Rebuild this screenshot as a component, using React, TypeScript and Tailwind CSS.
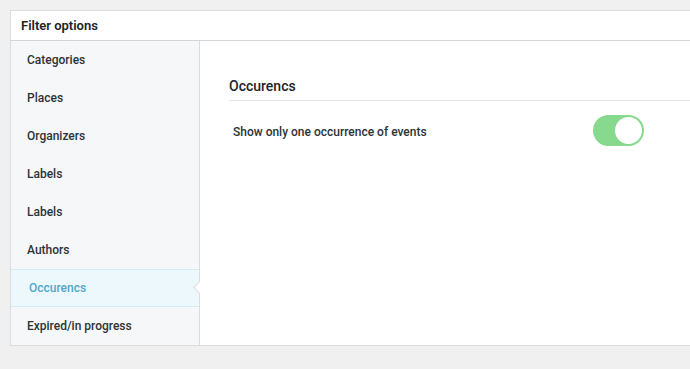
const items = ['Categories', 'Places', 'Organizers', 'Labels', 'Labels', 'Authors', 'Occurencs', 'Expired/in progress'];

function Toggle() {
  return (
    <div className="w-[51px] h-[31px] rounded-full bg-[#86d98d] p-[2px] flex justify-end">
      <div className="w-[27px] h-[27px] rounded-full bg-white" />
    </div>
  );
}

export default function App() {
  const active = 6;
  return (
    <div className="min-h-screen bg-[#f0f0f0] pt-[10px] pl-[10px] font-['Roboto',Arial,sans-serif]">
      <div className="bg-white border border-[#dcdcde] border-r-0">
        <div className="h-[30px] flex items-center pl-[10px] border-b border-[#d4d4d6] text-[13px] font-semibold text-[#1d2327]">
          Filter options
        </div>
        <div className="flex">
          <div className="w-[189px] bg-[#f6f7f9] border-r border-[#dcdcde]">
            {items.map((label, i) =>
              i === active ? (
                <div
                  key={i}
                  className="relative h-[38px] flex items-center pl-[18px] bg-[#ecf8fb] border-y border-[#d6ebf2] text-[12px] font-medium text-[#4fa8d0]"
                >
                  {label}
                  <div className="absolute right-[-5px] top-[13px] w-[9px] h-[9px] bg-white border-l border-b border-[#dcdcde] rotate-45" />
                </div>
              ) : (
                <div key={i} className="h-[38px] flex items-center pl-[16px] text-[12px] font-medium text-[#2c3338]">
                  {label}
                </div>
              )
            )}
          </div>
          <div className="flex-1 pl-[29px] pt-[35px]">
            <div className="pb-[4px] border-b border-[#e4e4e6] text-[14px] font-medium text-[#1d2327] leading-[20px]">
              Occurencs
            </div>
            <div className="flex items-center pl-[4px] pt-[14px]">
              <div className="w-[360px] text-[12px] font-medium text-[#2c3338] pt-[2px]">Show only one occurrence of events</div>
              <Toggle />
            </div>
          </div>
        </div>
      </div>
    </div>
  );
}
